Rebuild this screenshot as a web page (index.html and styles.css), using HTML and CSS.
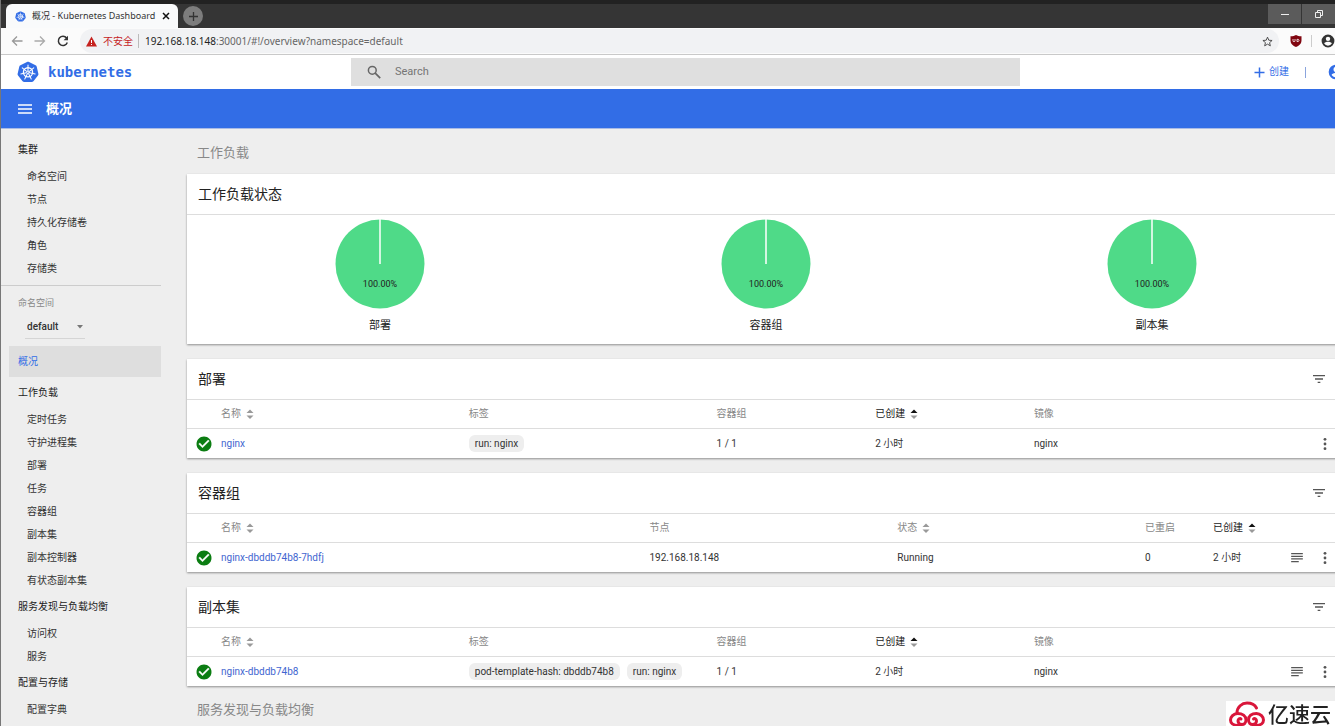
FILE: index.html
```html
<!DOCTYPE html>
<html lang="zh-CN">
<head>
<meta charset="utf-8">
<title>概况 - Kubernetes Dashboard</title>
<link rel="stylesheet" href="styles.css">
</head>
<body>
<svg class="defs" aria-hidden="true">
  <symbol id="k8s" viewBox="0 0 32 32">
    <path fill="#326de6" d="M16 1.200c.6 0 1 .1 1.500.3l9.500 4.600c.9.4 1.500 1.200 1.700 2.100l2.400 10.300c.2.9 0 1.900-.6 2.600l-6.600 8.300c-.6.7-1.500 1.200-2.400 1.200h-11c-.9 0-1.800-.5-2.400-1.200L1.500 21.100c-.6-.7-.8-1.700-.6-2.600L3.300 8.200c.2-.9.8-1.700 1.700-2.100l9.500-4.600c.5-.2 1-.3 1.500-.3z"/>
    <g fill="none" stroke="#fff" stroke-linecap="round">
      <circle cx="16" cy="16.500" r="6.700" stroke-width="1.900"/>
      <path stroke-width="1.500" d="M16 14V5.800M18 15l6.400-5.100M18.400 17.100l8 1.800M17.100 18.800l3.600 7.300M14.900 18.800l-3.600 7.300M13.600 17.100l-8 1.800M14 15L7.600 9.900"/>
      <circle cx="16" cy="16.500" r="1.800" stroke-width="1.300"/>
    </g>
  </symbol>
  <symbol id="ok" viewBox="0 0 24 24"><path fill="#0b7d12" d="M12 2C6.480 2 2 6.480 2 12s4.480 10 10 10 10-4.480 10-10S17.520 2 12 2z"/><path fill="#fff" stroke="#fff" stroke-width=".6" d="M10 17l-5-5 1.410-1.410L10 14.170l7.590-7.590L19 8z"/></symbol>
  <symbol id="filter" viewBox="0 0 24 24"><path d="M10 18h4v-2h-4v2zM3 6v2h18V6H3zm3 7h12v-2H6v2z"/></symbol>
  <symbol id="logs" viewBox="0 0 24 24"><path d="M2 3.500h20v2.200H2zM2 8h20v2.200H2zM2 12.500h20v2.200H2zM2 17h13v2.200H2z"/></symbol>
  <symbol id="dots" viewBox="0 0 24 24"><circle cx="12" cy="4" r="2.400"/><circle cx="12" cy="12" r="2.400"/><circle cx="12" cy="20" r="2.400"/></symbol>
  <symbol id="sort" viewBox="0 0 8 12"><path d="M.5 5L4 1.500 7.500 5z"/><path d="M.5 7.500L4 11l3.500-3.500z"/></symbol>
  <symbol id="sort-on" viewBox="0 0 8 12"><path fill="#111" d="M.5 5L4 1.500 7.500 5z"/><path fill="#999" d="M.5 7.500L4 11l3.500-3.500z"/></symbol>
  <symbol id="user" viewBox="0 0 24 24"><path fill-rule="evenodd" d="M12 1a11 11 0 1 0 0 22 11 11 0 0 0 0-22zm0 3.500a3.800 3.800 0 1 1 0 7.600 3.800 3.800 0 0 1 0-7.600zM12 20a8 8 0 0 1-6.600-3.600c.1-2.100 4.400-3.200 6.600-3.200s6.500 1.100 6.600 3.200A8 8 0 0 1 12 20z"/></symbol>
  <symbol id="pie" viewBox="0 0 90 90"><circle cx="45" cy="45" r="44.500" fill="#4fda88"/><path d="M45 0v45" stroke="#fff" stroke-width="1.500"/></symbol>
</svg>
<div class="browser">
  <div class="titlebar">
    <div class="tab">
      <svg class="ico-11"><use href="#k8s"/></svg>
      <span class="tab-title">概况 - Kubernetes Dashboard</span>
      <button class="plain" aria-label="关闭标签页"><svg class="ico-8" viewBox="0 0 8 8"><path d="M1 1l6 6M7 1L1 7" stroke="#111" stroke-width="1.500"/></svg></button>
    </div>
    <button class="new-tab" aria-label="新标签页"><svg class="ico-11" viewBox="0 0 11 11"><path d="M5.500 1v9M1 5.500h9" stroke="#333" stroke-width="1.300"/></svg></button>
    <div class="window-buttons">
      <button aria-label="最小化"><svg class="ico-8" viewBox="0 0 8 8"><path d="M0 4.500h8" stroke="#eee"/></svg></button>
      <button aria-label="还原"><svg class="ico-8" viewBox="0 0 8 8"><path d="M2.500 2V.5h5v5H6M.5 2.500h5v5h-5z" fill="none" stroke="#eee"/></svg></button>
    </div>
  </div>
  <div class="toolbar">
    <button class="plain" aria-label="后退"><svg class="ico-12" viewBox="0 0 12 12"><path d="M11.500 6H1.500M6 1.500L1.500 6 6 10.500" fill="none" stroke="#999" stroke-width="1.300"/></svg></button>
    <button class="plain" aria-label="前进"><svg class="ico-12" viewBox="0 0 12 12"><path d="M.5 6h10M6 1.500L10.500 6 6 10.500" fill="none" stroke="#aaa" stroke-width="1.300"/></svg></button>
    <button class="plain" aria-label="刷新"><svg class="ico-12" viewBox="0 0 12 12"><path d="M10.300 7.500A4.600 4.600 0 1 1 9.600 3" fill="none" stroke="#333" stroke-width="1.500"/><path d="M11 .8v4.400H6.600z" fill="#333"/></svg></button>
    <div class="address">
      <svg class="ico-11" viewBox="0 0 22 20"><path fill="#c5221f" d="M11 0l11 20H0z"/><path fill="#fff" d="M10 7h2v6h-2zM10 15h2v2h-2z"/></svg>
      <span class="insecure">不安全</span>
      <span class="url"><b>192.168.18.148</b>:30001/#!/overview?namespace=default</span>
      <svg class="ico-11" viewBox="0 0 24 24"><path fill="none" stroke="#444" stroke-width="2" d="M12 2.500l2.800 6.700 7.200.6-5.500 4.700 1.700 7L12 17.700l-6.200 3.800 1.700-7L2 9.800l7.200-.6z"/></svg>
    </div>
    <svg class="ico-12" viewBox="0 0 12 12"><path fill="#800610" d="M6 0c1.500 1 3 1.300 5.500 1.300v4C11.500 8.800 9 11 6 12 3 11 .5 8.800.5 5.300v-4C3 1.300 4.500 1 6 0z"/><path fill="none" stroke="#fff" stroke-width=".8" d="M3 4v1.700q0 1 1 1t1-1V4m2 .3v2.300q2 .2 2-1.200T7 4.300z"/></svg>
    <span class="toolbar-rule"></span>
    <svg class="ico-14 dark"><use href="#user"/></svg>
  </div>
  <div class="app">
    <header class="header">
      <a class="brand" href="#"><svg class="ico-22"><use href="#k8s"/></svg>kubernetes</a>
      <label class="search">
        <svg class="ico-14" viewBox="0 0 14 14"><circle cx="5.300" cy="5.300" r="3.900" fill="none" stroke="#666" stroke-width="1.500"/><path d="M8.200 8.200l5 5" stroke="#666" stroke-width="1.700"/></svg>
        <input type="text" placeholder="Search" aria-label="Search">
      </label>
      <div class="actions">
        <button class="plain create"><svg class="ico-11" viewBox="0 0 11 11"><path d="M5.500 .5v10M.5 5.500h10" stroke="#326de6" stroke-width="1.500"/></svg>创建</button>
        <span class="bar"></span>
        <button class="plain account" aria-label="账户"><svg class="ico-16"><use href="#user"/></svg></button>
      </div>
    </header>
    <div class="page-bar">
      <button class="plain" aria-label="菜单"><svg class="ico-14" viewBox="0 0 14 14"><path d="M0 3h14M0 7h14M0 11h14" stroke="#fff" stroke-width="1.500"/></svg></button>
      <h1>概况</h1>
    </div>
    <div class="body">
      <nav class="sidebar">
        <a class="nav-head" href="#">集群</a>
        <ul class="nav-list">
          <li><a href="#">命名空间</a></li><li><a href="#">节点</a></li><li><a href="#">持久化存储卷</a></li><li><a href="#">角色</a></li><li><a href="#">存储类</a></li>
        </ul>
        <div class="namespace">
          <label for="ns">命名空间</label>
          <div class="select"><select id="ns"><option>default</option></select><svg class="caret" viewBox="0 0 6 4"><path fill="#777" d="M0 0h6L3 3.500z"/></svg></div>
        </div>
        <a class="nav-head active" href="#">概况</a>
        <a class="nav-head" href="#">工作负载</a>
        <ul class="nav-list">
          <li><a href="#">定时任务</a></li><li><a href="#">守护进程集</a></li><li><a href="#">部署</a></li><li><a href="#">任务</a></li><li><a href="#">容器组</a></li><li><a href="#">副本集</a></li><li><a href="#">副本控制器</a></li><li><a href="#">有状态副本集</a></li>
        </ul>
        <a class="nav-head" href="#">服务发现与负载均衡</a>
        <ul class="nav-list"><li><a href="#">访问权</a></li><li><a href="#">服务</a></li></ul>
        <a class="nav-head" href="#">配置与存储</a>
        <ul class="nav-list"><li><a href="#">配置字典</a></li></ul>
      </nav>
      <main class="main">
        <h2 class="group">工作负载</h2>
        <section class="card">
          <div class="card-head"><h3>工作负载状态</h3></div>
          <div class="charts">
            <figure><div class="pie"><svg><use href="#pie"/></svg><span>100.00%</span></div><figcaption>部署</figcaption></figure>
            <figure><div class="pie"><svg><use href="#pie"/></svg><span>100.00%</span></div><figcaption>容器组</figcaption></figure>
            <figure><div class="pie"><svg><use href="#pie"/></svg><span>100.00%</span></div><figcaption>副本集</figcaption></figure>
          </div>
        </section>
        <section class="card">
          <div class="card-head"><h3>部署</h3><button class="plain" aria-label="筛选"><svg class="ico-16"><use href="#filter"/></svg></button></div>
          <table>
            <colgroup><col class="c-icon"><col class="c-wide"><col class="c-wide"><col class="c-mid"><col class="c-mid"><col><col class="c-act"></colgroup>
            <thead><tr><th></th><th>名称<svg class="sort"><use href="#sort"/></svg></th><th>标签</th><th>容器组</th><th class="sorted">已创建<svg class="sort"><use href="#sort-on"/></svg></th><th>镜像</th><th></th></tr></thead>
            <tbody><tr><td><svg class="status"><use href="#ok"/></svg></td><td><a href="#">nginx</a></td><td><span class="chip">run: nginx</span></td><td>1 / 1</td><td>2 小时</td><td>nginx</td><td><div class="row-actions"><button class="plain" aria-label="更多"><svg class="ico-14"><use href="#dots"/></svg></button></div></td></tr></tbody>
          </table>
        </section>
        <section class="card">
          <div class="card-head"><h3>容器组</h3><button class="plain" aria-label="筛选"><svg class="ico-16"><use href="#filter"/></svg></button></div>
          <table>
            <colgroup><col class="c-icon"><col class="c-name"><col class="c-wide"><col class="c-wide"><col class="c-small"><col><col class="c-act"></colgroup>
            <thead><tr><th></th><th>名称<svg class="sort"><use href="#sort"/></svg></th><th>节点</th><th>状态<svg class="sort"><use href="#sort"/></svg></th><th>已重启</th><th class="sorted">已创建<svg class="sort"><use href="#sort-on"/></svg></th><th></th></tr></thead>
            <tbody><tr><td><svg class="status"><use href="#ok"/></svg></td><td><a href="#">nginx-dbddb74b8-7hdfj</a></td><td>192.168.18.148</td><td>Running</td><td>0</td><td>2 小时</td><td><div class="row-actions"><button class="plain" aria-label="日志"><svg class="ico-14"><use href="#logs"/></svg></button><button class="plain" aria-label="更多"><svg class="ico-14"><use href="#dots"/></svg></button></div></td></tr></tbody>
          </table>
        </section>
        <section class="card">
          <div class="card-head"><h3>副本集</h3><button class="plain" aria-label="筛选"><svg class="ico-16"><use href="#filter"/></svg></button></div>
          <table>
            <colgroup><col class="c-icon"><col class="c-wide"><col class="c-wide"><col class="c-mid"><col class="c-mid"><col><col class="c-act"></colgroup>
            <thead><tr><th></th><th>名称<svg class="sort"><use href="#sort"/></svg></th><th>标签</th><th>容器组</th><th class="sorted">已创建<svg class="sort"><use href="#sort-on"/></svg></th><th>镜像</th><th></th></tr></thead>
            <tbody><tr><td><svg class="status"><use href="#ok"/></svg></td><td><a href="#">nginx-dbddb74b8</a></td><td><span class="chip">pod-template-hash: dbddb74b8</span><span class="chip">run: nginx</span></td><td>1 / 1</td><td>2 小时</td><td>nginx</td><td><div class="row-actions"><button class="plain" aria-label="日志"><svg class="ico-14"><use href="#logs"/></svg></button><button class="plain" aria-label="更多"><svg class="ico-14"><use href="#dots"/></svg></button></div></td></tr></tbody>
          </table>
        </section>
        <h2 class="group">服务发现与负载均衡</h2>
      </main>
    </div>
  </div>
  <div class="watermark">
    <svg viewBox="0 0 36 26"><g fill="none" stroke="#d9163a" stroke-width="3" stroke-linecap="round"><path d="M8 12C8 6 13 2 18 2s8 2 9.500 5"/><path d="M12 24.500H9c-5 0-7.500-2.500-7.500-5.500s3-6.500 7-6.500c5 0 8.500 2.500 8.500 6.500 0 3-2 4.500-4 4.500s-4-1.500-4-3.500 2-3 3-2"/><path d="M24 24.500h3c5 0 7.500-2.500 7.500-5.500s-3-6.500-7-6.500c-5 0-8 2.500-8 6.500 0 3 2 4.500 4 4.500s4-1.500 4-3.500-2-3-3-2"/></g></svg>
    <span>亿速云</span>
  </div>
</div>
</body>
</html>
```
FILE: styles.css
```css
* { box-sizing: border-box; }
body { margin: 0; font: 10px/16px Roboto, "Noto Sans CJK SC", sans-serif; color: #333; background: #eee; }
a { color: inherit; text-decoration: none; }
h1, h2, h3, ul, figure { margin: 0; padding: 0; font-weight: 400; }
ul { list-style: none; }
svg { display: block; flex: none; }
button, input, select { font: inherit; color: inherit; }
.plain { display: flex; align-items: center; padding: 0; border: 0; background: none; }
.defs { display: none; }
.ico-8 { width: 8px; height: 8px; }
.ico-11 { width: 11px; height: 11px; }
.ico-12 { width: 12px; height: 12px; }
.ico-14 { width: 14px; height: 14px; }
.ico-16 { width: 16px; height: 16px; }
.ico-22 { width: 22px; height: 22px; }
.dark { fill: #333; }

.browser { height: 100vh; overflow: hidden; border-left: 1px solid #777; }

/* window frame */
.titlebar { display: flex; height: 28px; padding-left: 5px; background: #353535; border-top: 4px solid #222; font-family: "Noto Sans", "Noto Sans CJK SC", sans-serif; }
.tab { display: flex; align-items: center; gap: 6px; width: 172px; padding: 0 8px 0 9px; background: #f9fafb; border-radius: 6px 6px 0 0; color: #333; font-size: 9px; white-space: nowrap; }
.tab-title { flex: 1; }
.new-tab { display: flex; align-items: center; justify-content: center; align-self: center; width: 20px; height: 20px; margin-left: 5px; padding: 0; border: 0; border-radius: 50%; background: #7d7d7d; }
.window-buttons { display: flex; gap: 1px; margin-left: auto; }
.window-buttons button { display: flex; align-items: center; justify-content: center; width: 33px; height: 20px; padding: 0; border: 0; background: #5b5b5b; }
.toolbar { display: flex; align-items: center; gap: 11px; height: 27px; padding-left: 10px; background: #fbfbfb; border-bottom: 1px solid #c9c9c9; overflow: hidden; }
.address { flex: 1; display: flex; align-items: center; gap: 6px; height: 24px; padding: 0 6px; border-radius: 12px; background: #f1f2f4; font: 10px/16px "Noto Sans", "Noto Sans CJK SC", sans-serif; }
.insecure { padding-right: 5px; border-right: 1px solid #bbb; color: #c5221f; line-height: 14px; }
.url { flex: 1; color: #666; }
.url b { font-weight: 400; color: #222; }
.toolbar-rule { width: 1px; height: 12px; margin: 0 -2px; background: #ccc; }

/* dashboard header */
.app { margin-right: -26px; }
.header { display: grid; grid-template-columns: 350px 1fr 341px; align-items: center; height: 34px; background: #fff; }
.brand { display: flex; align-items: center; gap: 9px; padding-left: 16px; color: #326de6; font: bold 14px/20px "DejaVu Sans Mono", monospace; }
.search { display: flex; align-items: center; gap: 14px; height: 28px; padding-left: 16px; background: #dfdfdf; }
.search input { flex: 1; border: 0; padding: 0; outline: 0; background: none; font-size: 11px; }
.search input::placeholder { color: #757575; }
.actions { display: flex; align-items: center; justify-content: flex-end; gap: 16px; padding-right: 17px; color: #326de6; fill: #326de6; }
.create { gap: 4px; }
.bar { width: 1px; height: 11px; background: #8aa4dd; }
.account { margin-left: 6px; }
.page-bar { display: flex; align-items: center; gap: 14px; height: 40px; padding-left: 17px; background: #326de6; border-bottom: 1px solid #a9bbe6; color: #fff; }
.page-bar h1 { font-size: 13px; font-weight: 700; }

/* navigation */
.body { display: flex; }
.sidebar { flex: none; width: 160px; padding-top: 5px; }
.nav-head { display: block; padding-left: 17px; line-height: 31px; color: #222; }
.nav-list + .nav-head { line-height: 30px; }
.nav-head.active { margin-left: 8px; padding-left: 9px; background: #dedede; color: #326de6; }
.nav-list a { display: block; padding-left: 26px; line-height: 23px; }
.namespace { margin-top: 5px; padding: 9px 0 7px 17px; border-top: 1px solid #ccc; }
.namespace label { display: block; color: #888; font-size: 9px; }
.select { display: flex; align-items: center; width: 60px; height: 24px; margin: 4px 0 0 7px; padding: 0 2px; border-bottom: 1px solid #d5d5d5; }
.select select { flex: 1; appearance: none; padding: 0; border: 0; background: none; font-weight: 500; }
.caret { width: 6px; height: 4px; }

/* content */
.main { flex: 1; min-width: 0; padding: 0 16px 0 26px; }
.group { height: 45px; padding-left: 10px; font-size: 13px; line-height: 48px; color: #888; }
.card { margin-bottom: 15px; background: #fff; box-shadow: 0 1px 2px rgba(0,0,0,.4); }
.card:last-of-type { margin-bottom: 0; }
.card-head { display: flex; align-items: center; justify-content: space-between; height: 40px; padding: 0 18px 0 11px; }
.card-head h3 { font-size: 14px; line-height: 20px; color: #222; }
.charts { display: grid; grid-template-columns: 1fr 1fr 1fr; padding-top: 4px; border-top: 1px solid #ddd; font-size: 11px; text-align: center; color: #222; }
.pie { display: grid; justify-items: center; }
.pie svg { grid-area: 1 / 1; width: 90px; height: 90px; }
.pie span { grid-area: 1 / 1; align-self: end; padding-bottom: 17px; font-size: 9px; line-height: 16px; }
.charts figcaption { line-height: 34px; padding-bottom: 1px; }
table { width: 100%; table-layout: fixed; border-collapse: separate; border-spacing: 0; }
th, td { padding: 0; border-top: 1px solid #ddd; text-align: left; white-space: nowrap; }
th { height: 29px; font-weight: 400; color: #888; }
td { height: 30px; }
th.sorted { color: #222; }
td a { color: #3f66d0; }
.c-icon { width: 34px; }
.c-wide { width: 21.4%; }
.c-mid { width: 13.7%; }
.c-name { width: 37%; }
.c-small { width: 68px; }
.c-act { width: 60px; }
.sort { display: inline-block; width: 8px; height: 12px; margin-left: 5px; vertical-align: middle; fill: #999; }
.status { width: 18px; height: 18px; margin-left: 8px; }
.chip { display: inline-block; margin-right: 7px; padding: 0 6px; border-radius: 6px; background: #eee; line-height: 17px; }
.row-actions { display: flex; justify-content: flex-end; gap: 14px; padding-right: 13px; }
.row-actions, .card-head button { fill: #555; }

.watermark { position: fixed; right: 0; bottom: 0; display: flex; align-items: center; gap: 3px; height: 25px; padding: 0 4px 0 3px; background: #fff; color: #222; font: 500 21px/25px "Noto Sans CJK SC", sans-serif; }
.watermark svg { width: 36px; height: 26px; }
```
